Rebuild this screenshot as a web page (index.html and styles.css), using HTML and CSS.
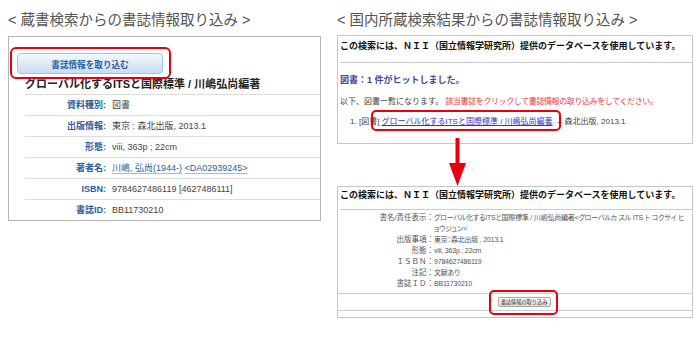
FILE: index.html
```html
<!DOCTYPE html>
<html lang="ja">
<head>
  <meta charset="UTF-8" />
  <title>書誌情報の取り込み</title>
  <link rel="stylesheet" href="styles.css">
</head>
<body>
  <div class="page">
    <div class="col col-left">
      <h2 class="head">&lt; 蔵書検索からの書誌情報取り込み &gt;</h2>
      <div class="opac">
        <span class="mark mark-btn"><button class="btn-import">書誌情報を取り込む</button></span>
        <h3 class="opac-title">グローバル化するITSと国際標準 / 川嶋弘尚編著</h3>
        <dl class="opac-table">
          <div class="opac-row"><dt>資料種別:</dt><dd>図書</dd></div>
          <div class="opac-row"><dt>出版情報:</dt><dd>東京 : 森北出版, 2013.1</dd></div>
          <div class="opac-row"><dt>形態:</dt><dd>viii, 363p ; 22cm</dd></div>
          <div class="opac-row"><dt>著者名:</dt><dd><a class="author" href="#">川嶋, 弘尚(1944-)</a> <a class="author" href="#">&lt;DA02939245&gt;</a></dd></div>
          <div class="opac-row"><dt>ISBN:</dt><dd>9784627486119 [4627486111]</dd></div>
          <div class="opac-row"><dt>書誌ID:</dt><dd>BB11730210</dd></div>
        </dl>
      </div>
    </div>

    <div class="col col-right">
      <h2 class="head">&lt; 国内所蔵検索結果からの書誌情報取り込み &gt;</h2>
      <div class="nii">
        <p class="nii-head">この検索には、ＮＩＩ（国立情報学研究所）提供のデータベースを使用しています。</p>
        <p class="hit">図書：1 件がヒットしました。</p>
        <p class="note">以下、図書一覧になります。 <span class="warn">該当書誌をクリックして書誌情報の取り込みをしてください。</span></p>
        <ol class="hits">
          <li>[図書] <a class="mark mark-link" href="#">グローバル化するITSと国際標準 / 川嶋弘尚編著</a>. -- 森北出版, 2013.1</li>
        </ol>
      </div>

      <svg class="arrow" width="17" height="48" viewBox="0 0 17 48">
        <rect x="6.5" y="0" width="4" height="26" fill="#e60012" />
        <polygon points="0,25 17,25 8.5,48" fill="#e60012" />
      </svg>

      <div class="nii detail">
        <p class="nii-head detail-head">この検索には、ＮＩＩ（国立情報学研究所）提供のデータベースを使用しています。</p>
        <dl class="detail-table">
          <div class="drow"><dt>書名/責任表示</dt><dd>グローバル化するITSと国際標準 / 川嶋弘尚編著&lt;グローバルカ スル ITS ト コクサイ ヒョウジュン&gt;</dd></div>
          <div class="drow"><dt>出版事項</dt><dd>東京：森北出版 , 2013.1</dd></div>
          <div class="drow"><dt>形態</dt><dd>viii, 363p ; 22cm</dd></div>
          <div class="drow"><dt>ＩＳＢＮ</dt><dd>9784627486119</dd></div>
          <div class="drow"><dt>注記</dt><dd>文献あり</dd></div>
          <div class="drow"><dt>書誌ＩＤ</dt><dd>BB11730210</dd></div>
        </dl>
        <div class="detail-foot">
          <span class="mark mark-small"><button class="btn-gray">書誌情報の取り込み</button></span>
        </div>
      </div>
    </div>
  </div>
</body>
</html>
```

FILE: styles.css
```css
body {
  margin: 0;
  font-family: "Liberation Sans", "Noto Sans CJK JP", sans-serif;
  color: #333;
  background: #fff;
}
.page {
  display: flex;
  align-items: flex-start;
  padding-top: 10px;
}
.col-left {
  width: 313px;
  margin-left: 8px;
}
.col-right {
  width: 356px;
  margin-left: 16px;
}
.head {
  margin: 0 0 6px;
  font-size: 14.5px;
  font-weight: normal;
  line-height: 20px;
  color: #555;
  white-space: nowrap;
}
.col-right .head {
  margin-bottom: 5px;
}

/* red marks drawn over the screenshot */
.mark {
  position: relative;
}
.mark::after {
  content: "";
  position: absolute;
  border: 2px solid #e60012;
  border-radius: 6px;
  pointer-events: none;
}
.mark-btn {
  display: block;
  width: 146px;
  margin-left: 8px;
}
.mark-btn::after {
  top: -6px;
  right: -8px;
  bottom: -5px;
  left: -7px;
}
.mark-link::after {
  top: -7px;
  right: -8px;
  bottom: -5px;
  left: -11px;
  border-radius: 5px;
}
.mark-small {
  display: inline-block;
}
.mark-small::after {
  top: -7px;
  right: -7px;
  bottom: -8px;
  left: -9px;
  border-radius: 5px;
}

/* opac */
.opac {
  border: 1px solid #b5b5b5;
  padding-top: 16px;
}
.btn-import {
  display: block;
  width: 146px;
  height: 21px;
  padding: 0;
  border: 1px solid #a9c3df;
  border-radius: 4px;
  background: linear-gradient(#f3f8fd, #c9ddf2);
  color: #2d5f9e;
  font-family: "Liberation Sans", "Noto Sans CJK JP", sans-serif;
  font-size: 8.6px;
  font-weight: bold;
}
.opac-title {
  margin: 1px 0 1px 16px;
  font-size: 11px;
  line-height: 18px;
  color: #222;
  white-space: nowrap;
}
.opac-table {
  margin: 0 0 0 16px;
}
.opac-row {
  display: flex;
  height: 20px;
  border-top: 1px solid #ddd;
  font-size: 9px;
  line-height: 20px;
}
.opac-row dt {
  width: 81px;
  text-align: right;
  font-weight: bold;
  color: #2b5d9c;
}
.opac-row dd {
  margin: 0 0 0 6px;
  color: #444;
}
.author {
  color: #2b5d9c;
  text-decoration: underline;
  text-decoration-color: #9dbde0;
  text-underline-offset: 2px;
}

/* nii */
.nii {
  border: 1px solid #c6c6c6;
}
.nii p {
  margin: 0;
}
.nii .nii-head {
  margin-left: 2px;
  padding-bottom: 6px;
  border-bottom: 1px solid #ccc;
  font-size: 9px;
  font-weight: bold;
  line-height: 20px;
  color: #111;
  white-space: nowrap;
}
.nii .hit {
  margin: 11px 0 0 2px;
  font-size: 9px;
  font-weight: bold;
  line-height: 12px;
  color: #45459b;
}
.nii .note {
  margin: 10px 0 0 2px;
  font-size: 8px;
  line-height: 12px;
  color: #444;
  white-space: nowrap;
}
.warn {
  color: #f03a3a;
  letter-spacing: -0.4px;
}
.hits {
  margin: 8px 0 0;
  padding: 0 0 15px 12px;
  list-style: decimal inside;
  font-size: 8px;
  line-height: 12px;
  color: #444;
  white-space: nowrap;
}
.hits a {
  color: #3333cc;
}
.arrow {
  display: block;
  margin: -6px 0 0 112px;
}

.nii .detail-head {
  padding-bottom: 5px;
  line-height: 17px;
}
.detail-table {
  margin: 2px 0 0;
}
.drow {
  display: flex;
  font-size: 7.5px;
  line-height: 11px;
  color: #555;
}
.drow dt {
  flex: none;
  width: 96px;
  text-align: right;
}
.drow dt::after {
  content: "：";
}
.drow dd {
  margin: 0;
  padding-right: 4px;
  font-size: 7px;
  letter-spacing: -0.2px;
  font-feature-settings: "palt";
}
.detail-foot {
  margin: 4px 0 6px;
  padding: 3px 0 3px 18px;
  border-top: 1px solid #ccc;
  border-bottom: 1px solid #ccc;
  text-align: center;
  line-height: 0;
}
.btn-gray {
  width: 53px;
  height: 10px;
  padding: 0;
  border: 1px solid #aaa;
  border-radius: 2px;
  background: linear-gradient(#fafafa, #dcdcdc);
  color: #333;
  font-family: "Liberation Sans", "Noto Sans CJK JP", sans-serif;
  font-size: 5.2px;
  line-height: 8px;
}
```
